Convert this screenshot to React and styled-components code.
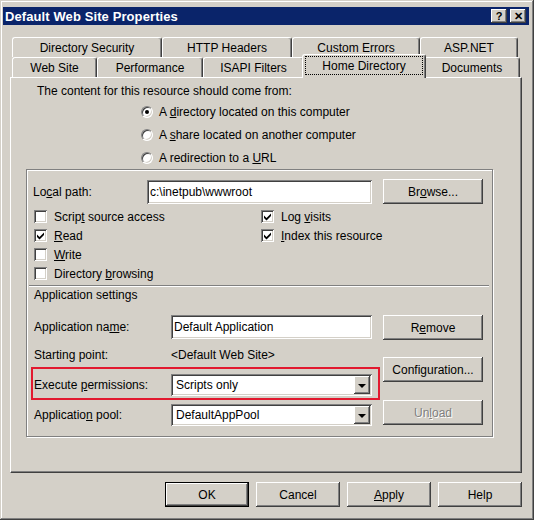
import React from 'react'
import styled, { createGlobalStyle, css } from 'styled-components'

const GlobalStyle = createGlobalStyle`
  * { box-sizing: border-box; }
  body {
    margin: 0;
    background: #d4d0c8;
    font-family: "Liberation Sans", Arial, sans-serif;
    font-size: 12px;
    color: #000;
  }
`

const raised = css`
  background: #d4d0c8;
  box-shadow: inset -1px -1px #404040, inset 1px 1px #fff, inset -2px -2px #808080, inset 2px 2px #d4d0c8;
`
const sunken = css`
  background: #fff;
  box-shadow: inset 1px 1px #808080, inset -1px -1px #fff, inset 2px 2px #404040, inset -2px -2px #d4d0c8;
`

const Window = styled.div`
  width: 534px;
  height: 520px;
  padding: 7px 5px 0 3px;
  background: #d4d0c8;
  box-shadow: inset -1px -1px #404040, inset 1px 1px #d4d0c8, inset -2px -2px #808080, inset 2px 2px #fff;
  display: flex;
  flex-direction: column;
`

const TitleBar = styled.div`
  height: 18px;
  background: #0a246a;
  display: flex;
  align-items: center;
  justify-content: space-between;
  padding: 0 3px 0 2px;
`

const Title = styled.span`
  color: #fff;
  font-weight: bold;
  font-size: 13px;
  letter-spacing: 0.1px;
`

const CaptionButtons = styled.div`
  display: flex;
  gap: 3px;
`

const CaptionButton = styled.span`
  ${raised};
  width: 16px;
  height: 14px;
  display: flex;
  align-items: center;
  justify-content: center;
  font-weight: bold;
  font-size: 11px;
  line-height: 1;
`

const Content = styled.div`
  padding: 12px 0 0 7px;
  display: flex;
  flex-direction: column;
`

const TabStrip = styled.div`
  padding-left: 2px;
  display: flex;
  flex-direction: column;
`

const TabRow = styled.div`
  display: flex;
  height: 20px;
  align-items: flex-start;
`

const Tab = styled.div`
  width: ${p => p.$w}px;
  height: 20px;
  display: flex;
  align-items: center;
  justify-content: center;
  background: #d4d0c8;
  border-top: 1px solid #fff;
  border-left: 1px solid #fff;
  border-right: 1px solid #404040;
  border-radius: 3px 3px 0 0;
  box-shadow: inset -1px 0 #808080;
  white-space: nowrap;
  ${p => p.$active && css`
    position: relative;
    z-index: 1;
    width: ${p.$w + 4}px;
    height: 24px;
    margin: -3px -2px 0;
    padding: 1px 2px 3px;
  `}
`

const Focus = styled.span`
  flex: 1;
  align-self: stretch;
  display: flex;
  align-items: center;
  justify-content: center;
  outline: 1px dotted #000;
  outline-offset: -1px;
`

const Panel = styled.div`
  width: 512px;
  height: 396px;
  border-top: 1px solid #fff;
  border-left: 1px solid #fff;
  border-right: 1px solid #404040;
  border-bottom: 1px solid #404040;
  box-shadow: inset -1px -1px #808080;
  padding: 6px 0 0 15px;
`

const Lead = styled.div`
  padding-left: 11px;
  line-height: 15px;
`

const RadioList = styled.div`
  margin: 1px 0 0 115px;
  display: flex;
  flex-direction: column;
`

const Option = styled.label`
  height: 23px;
  display: flex;
  align-items: center;
  gap: 6px;
`

const RadioDot = styled.span`
  width: 12px;
  height: 12px;
  border-radius: 50%;
  background: #fff;
  border: 1px solid;
  border-color: #808080 #fff #fff #808080;
  box-shadow: inset 1px 1px #404040, inset -1px -1px #d4d0c8;
  display: flex;
  align-items: center;
  justify-content: center;
  &::after {
    content: '';
    width: 4px;
    height: 4px;
    border-radius: 50%;
    background: ${p => (p.$on ? '#000' : 'transparent')};
  }
`

const Group = styled.div`
  width: 467px;
  height: 268px;
  border: 1px solid #808080;
  box-shadow: inset 1px 1px #fff, 1px 1px #fff;
  padding: 9px 0 0 6px;
`

const PathRow = styled.div`
  display: flex;
  align-items: center;
  height: 25px;
`

const Label = styled.span`
  width: ${p => p.$w || 114}px;
  flex: none;
  white-space: nowrap;
`

const TextField = styled.div`
  ${sunken};
  width: ${p => p.$w}px;
  height: ${p => p.$h || 24}px;
  padding: 0 3px;
  display: flex;
  align-items: center;
  white-space: nowrap;
`

const Button = styled.div`
  ${raised};
  width: ${p => p.$w || 100}px;
  height: 25px;
  flex: none;
  display: flex;
  align-items: center;
  justify-content: center;
  margin-left: ${p => p.$ml || 0}px;
  margin-top: ${p => p.$mt || 0}px;
  color: ${p => (p.$disabled ? '#808080' : '#000')};
  text-shadow: ${p => (p.$disabled ? '1px 1px #fff' : 'none')};
  ${p => p.$default && css`
    box-shadow: inset 0 0 0 1px #000, inset -2px -2px #404040, inset 2px 2px #fff, inset -3px -3px #808080;
  `}
`

const CheckGrid = styled.div`
  margin: 3px 0 0 1px;
  display: grid;
  grid-template-columns: 227px auto;
  grid-template-rows: repeat(4, 19px);
  grid-auto-flow: column;
`

const CheckItem = styled.label`
  display: flex;
  align-items: center;
  gap: 7px;
`

const Box = styled.span`
  ${sunken};
  width: 13px;
  height: 13px;
  display: flex;
  align-items: center;
  justify-content: center;
`

const Separator = styled.div`
  margin: 2px 0 0 -4px;
  width: 460px;
  height: 2px;
  border-top: 1px solid #808080;
  border-bottom: 1px solid #fff;
`

const SectionTitle = styled.div`
  margin-top: 1px;
  padding-left: 1px;
  line-height: 15px;
`

const AppArea = styled.div`
  margin: 12px 0 0 -2px;
  display: flex;
`

const FieldColumn = styled.div`
  width: 349px;
  display: flex;
  flex-direction: column;
`

const FieldRow = styled.div`
  display: flex;
  align-items: center;
  height: ${p => p.$h}px;
  padding: ${p => p.$pt || 0}px 0 0 ${p => p.$pl ?? 3}px;
  margin-top: ${p => p.$mt || 0}px;
`

const Highlight = styled.div`
  display: flex;
  align-items: flex-start;
  height: 33px;
  border: 2px solid #e2192f;
  padding-top: 5px;
`

const ButtonColumn = styled.div`
  margin-left: 3px;
  display: flex;
  flex-direction: column;
`

const Combo = styled.div`
  ${sunken};
  width: 201px;
  height: 22px;
  padding: 2px 2px 2px 5px;
  display: flex;
  align-items: center;
  justify-content: space-between;
`

const DropButton = styled.span`
  ${raised};
  width: 16px;
  height: 18px;
  display: flex;
  align-items: center;
  justify-content: center;
  &::after {
    content: '';
    border-left: 4px solid transparent;
    border-right: 4px solid transparent;
    border-top: 4px solid #000;
    margin-top: 1px;
  }
`

const Footer = styled.div`
  width: 512px;
  margin-top: 9px;
  display: flex;
  justify-content: flex-end;
  gap: 7px;
`

const U = styled.span`
  text-decoration: underline;
  text-underline-offset: 1px;
`

const Check = ({ on, children }) => (
  <CheckItem>
    <Box>
      {on && (
        <svg width="9" height="9" viewBox="0 0 9 9">
          <path d="M1 3.5 L3.5 6 L8 1.5 L8 4 L3.5 8.5 L1 6 Z" fill="#000" />
        </svg>
      )}
    </Box>
    <span>{children}</span>
  </CheckItem>
)

const Radio = ({ on, children }) => (
  <Option>
    <RadioDot $on={on} />
    <span>{children}</span>
  </Option>
)

const Select = ({ value }) => (
  <Combo>
    <span>{value}</span>
    <DropButton />
  </Combo>
)

const backTabs = [
  ['Directory Security', 150],
  ['HTTP Headers', 130],
  ['Custom Errors', 128],
  ['ASP.NET', 98],
]
const frontTabs = [
  ['Web Site', 85],
  ['Performance', 106],
  ['ISAPI Filters', 101],
  ['Home Directory', 120, true],
  ['Documents', 96],
]

export default function App() {
  return (
    <>
      <GlobalStyle />
      <Window>
        <TitleBar>
          <Title>Default Web Site Properties</Title>
          <CaptionButtons>
            <CaptionButton>?</CaptionButton>
            <CaptionButton>✕</CaptionButton>
          </CaptionButtons>
        </TitleBar>
        <Content>
          <TabStrip>
            <TabRow>
              {backTabs.map(([name, w]) => (
                <Tab key={name} $w={w}>{name}</Tab>
              ))}
            </TabRow>
            <TabRow>
              {frontTabs.map(([name, w, active]) => (
                <Tab key={name} $w={w} $active={active}>
                  {active ? <Focus>{name}</Focus> : name}
                </Tab>
              ))}
            </TabRow>
          </TabStrip>
          <Panel>
            <Lead>The content for this resource should come from:</Lead>
            <RadioList>
              <Radio on>A <U>d</U>irectory located on this computer</Radio>
              <Radio>A <U>s</U>hare located on another computer</Radio>
              <Radio>A redirection to a <U>U</U>RL</Radio>
            </RadioList>
            <Group>
              <PathRow>
                <Label>Lo<U>c</U>al path:</Label>
                <TextField $w={225}>c:\inetpub\wwwroot</TextField>
                <Button $ml={11}>Br<U>o</U>wse...</Button>
              </PathRow>
              <CheckGrid>
                <Check>Scrip<U>t</U> source access</Check>
                <Check on><U>R</U>ead</Check>
                <Check><U>W</U>rite</Check>
                <Check>Directory <U>b</U>rowsing</Check>
                <Check on>Log <U>v</U>isits</Check>
                <Check on><U>I</U>ndex this resource</Check>
              </CheckGrid>
              <Separator />
              <SectionTitle>Application settings</SectionTitle>
              <AppArea>
                <FieldColumn>
                  <FieldRow $h={24}>
                    <Label $w={137}>Application na<U>m</U>e:</Label>
                    <TextField $w={201}>Default Application</TextField>
                  </FieldRow>
                  <FieldRow $h={28} $pt={4}>
                    <Label $w={137}>Starting point:</Label>
                    <span>&lt;Default Web Site&gt;</span>
                  </FieldRow>
                  <Highlight>
                    <FieldRow $h={22} $pl={1}>
                      <Label $w={137}>Execute <U>p</U>ermissions:</Label>
                      <Select value="Scripts only" />
                    </FieldRow>
                  </Highlight>
                  <FieldRow $h={22} $mt={4}>
                    <Label $w={137}>Applicatio<U>n</U> pool:</Label>
                    <Select value="DefaultAppPool" />
                  </FieldRow>
                </FieldColumn>
                <ButtonColumn>
                  <Button>R<U>e</U>move</Button>
                  <Button $mt={17}>Confi<U>g</U>uration...</Button>
                  <Button $mt={18} $disabled>Un<U>l</U>oad</Button>
                </ButtonColumn>
              </AppArea>
            </Group>
          </Panel>
          <Footer>
            <Button $w={84} $default>OK</Button>
            <Button $w={84}>Cancel</Button>
            <Button $w={84}><U>A</U>pply</Button>
            <Button $w={84}>Help</Button>
          </Footer>
        </Content>
      </Window>
    </>
  )
}
